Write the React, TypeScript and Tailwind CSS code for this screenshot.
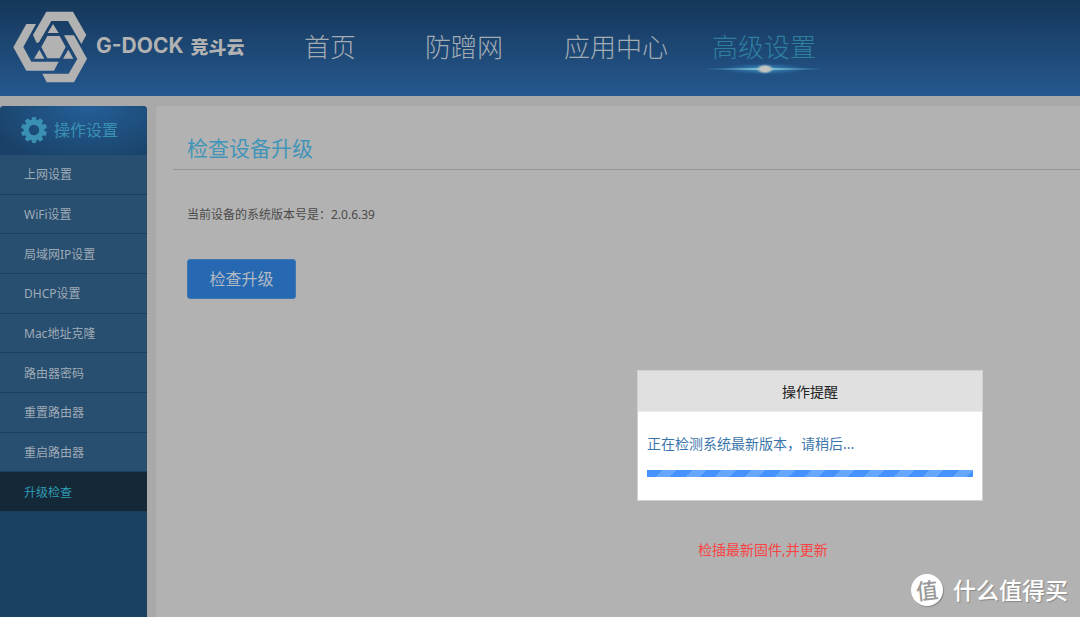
import { useState } from 'react'

const navItems = ['首页', '防蹭网', '应用中心', '高级设置']

const menuItems = [
  '上网设置',
  'WiFi设置',
  '局域网IP设置',
  'DHCP设置',
  'Mac地址克隆',
  '路由器密码',
  '重置路由器',
  '重启路由器',
  '升级检查',
]

function Logo() {
  return (
    <svg viewBox="38 32 222 216" className="h-[72px] w-[74px] shrink-0" fill="#b2b2b2" aria-hidden="true">
      <path d="M98 104 138 34H218L258 104 243 131 203 62H153L116 126 109 128Z" />
      <path d="M78 71H107L69 140 93 184H175L161 211H78L39 141Z" />
      <path d="M191 105H221L260 175 221 246H139L126 220H205L231 176Z" />
      <path d="M141 107H178L196 140 178 174H141L123 140Z" />
      <path d="M158 71 175 98H142ZM117 148 132 175H101ZM204 148 219 175H188Z" />
    </svg>
  )
}

function GearIcon() {
  const teeth = [0, 36, 72, 108, 144, 180, 216, 252, 288, 324]
  return (
    <svg viewBox="0 0 26 26" className="size-[26px] shrink-0" fill="#3a90b2" aria-hidden="true">
      {teeth.map((angle) => (
        <rect key={angle} x="10.7" y="0" width="4.6" height="6" rx="1.4" transform={`rotate(${angle} 13 13)`} />
      ))}
      <circle cx="13" cy="13" r="7.8" fill="none" stroke="#3a90b2" strokeWidth="5.2" />
    </svg>
  )
}

function ActiveGlow() {
  return (
    <svg viewBox="0 0 120 16" className="absolute top-[60px] left-1/2 h-4 w-[120px] -translate-x-1/2" aria-hidden="true">
      <defs>
        <linearGradient id="line">
          <stop offset="0" stopColor="#49a5c4" stopOpacity="0" />
          <stop offset=".5" stopColor="#8fc6d2" />
          <stop offset="1" stopColor="#49a5c4" stopOpacity="0" />
        </linearGradient>
        <radialGradient id="halo">
          <stop offset="0" stopColor="#4aa8d8" stopOpacity=".9" />
          <stop offset="1" stopColor="#2f78b8" stopOpacity="0" />
        </radialGradient>
        <radialGradient id="core">
          <stop offset=".5" stopColor="#c2c5c0" />
          <stop offset="1" stopColor="#a5c4c8" stopOpacity="0" />
        </radialGradient>
      </defs>
      <ellipse cx="61" cy="9" rx="44" ry="6" fill="url(#halo)" />
      <rect y="8" width="120" height="2" fill="url(#line)" />
      <ellipse cx="61" cy="9" rx="9" ry="5" fill="url(#core)" />
    </svg>
  )
}

export default function App() {
  const [activeNav, setActiveNav] = useState('高级设置')
  const [activeMenu, setActiveMenu] = useState('升级检查')

  return (
    <div className="relative flex min-h-screen flex-col overflow-hidden bg-[#a9a9a9] font-['Noto_Sans','Noto_Sans_CJK_SC',sans-serif]">
      <header className="flex h-24 items-center bg-linear-to-b from-[#15375a] to-[#25588f] pl-[13px]">
        <a href="#home" className="flex w-[291px] shrink-0 items-center gap-[9px] pb-[2px]">
          <Logo />
          <span className="flex items-center gap-[7px] pb-[2px] whitespace-nowrap text-[#b2b2b2]">
            <span className="font-['Inter',sans-serif] text-[21px] font-bold">G-DOCK</span>
            <span className="font-['Noto_Sans_CJK_SC',sans-serif] text-[18px] font-black">竞斗云</span>
          </span>
        </a>
        <nav className="flex gap-[69px]">
          {navItems.map((item, i) => (
            <a
              key={item}
              href={`#nav-${i}`}
              onClick={() => setActiveNav(item)}
              className={`relative flex h-24 items-center pb-[2px] whitespace-nowrap text-[26px] font-light ${
                activeNav === item ? 'text-[#2f7f9f]' : 'text-[#a3abb3]'
              } ${i === 2 ? '-ml-2' : ''} ${i === 3 ? '-ml-[25px]' : ''}`}
            >
              {item}
              {activeNav === item && <ActiveGlow />}
            </a>
          ))}
        </nav>
      </header>

      <div className="flex flex-1 gap-[9px] pt-[10px]">
        <aside className="w-[147px] shrink-0 overflow-hidden rounded-t bg-[#1a4062]">
          <h2 className="flex h-[49px] items-center gap-[7px] bg-[radial-gradient(ellipse_at_60%_0%,#245f98,#1a4268_85%)] pb-[2px] pl-[21px] text-[16px] text-[#3a90b2]">
            <GearIcon />
            操作设置
          </h2>
          <ul className="grid h-[357px] auto-rows-fr text-[12px]">
            {menuItems.map((item, i) => (
              <li key={item} className="flex border-b border-[#1c3d5c]">
                <a
                  href={`#menu-${i}`}
                  onClick={() => setActiveMenu(item)}
                  className={`flex flex-1 items-center pt-[2px] pl-6 ${
                    activeMenu === item ? 'bg-[#152838] text-[#2f9cb4]' : 'bg-[#284e70] text-[#9fabb5]'
                  }`}
                >
                  {item}
                </a>
              </li>
            ))}
          </ul>
        </aside>

        <main className="flex-1 rounded-tl bg-[#b2b2b2] pl-[17px]">
          <h1 className="flex h-16 items-center border-b border-[#969696] pt-[22px] pl-[14px] text-[21px] text-[#4295b8]">
            检查设备升级
          </h1>
          <div className="pt-9 pl-[14px]">
            <p className="text-[12px] leading-[18px] text-[#4a4a4a]">当前设备的系统版本号是：2.0.6.39</p>
            <button
              type="button"
              className="mt-[35px] h-10 w-[109px] rounded-[3px] border border-[#3d78b5] bg-[#2669b2] text-[16px] text-[#b2b9c2]"
            >
              检查升级
            </button>
          </div>
        </main>
      </div>

      <div className="absolute top-[370px] right-[97px] flex w-[346px] flex-col">
        <section
          role="dialog"
          aria-labelledby="dialog-title"
          className="h-[131px] border border-[#d0d0d0] bg-white"
        >
          <h2
            id="dialog-title"
            className="flex h-[41px] items-center justify-center border-b border-[#ececec] bg-[#e0e0e0] text-[14px] text-[#222222]"
          >
            操作提醒
          </h2>
          <div className="px-[9px] pt-[22px]">
            <p className="text-[14px] leading-5 text-[#3b76ab]">正在检测系统最新版本，请稍后...</p>
            <div
              role="progressbar"
              aria-label="检测进度"
              className="mt-4 h-[7px] bg-[#4592ff] bg-[repeating-linear-gradient(135deg,#4592ff_0,#4592ff_11px,#66a8ff_11px,#66a8ff_21px)]"
            />
          </div>
        </section>
        <p className="mt-[39px] pl-[61px] text-[14px] leading-5 text-[#fb4343]">检插最新固件,并更新</p>
      </div>

      <div className="absolute right-3 bottom-[11px] flex items-center gap-[10px] text-white">
        <span className="flex size-8 items-center justify-center rounded-full bg-white text-[22px] font-medium text-[#999999] shadow-[1px_1px_1px_#888888]">
          <span className="-rotate-6">值</span>
        </span>
        <span className="text-[23px] leading-8 font-medium text-shadow-[1px_1px_1px_#888888]">什么值得买</span>
      </div>
    </div>
  )
}
